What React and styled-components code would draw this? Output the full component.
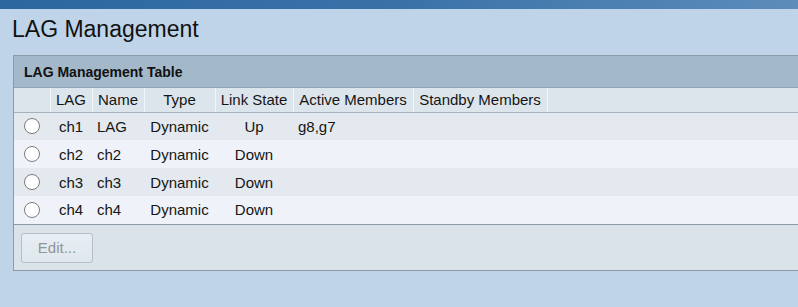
import styled, { createGlobalStyle } from "styled-components"

const Global = createGlobalStyle`
  html, body {
    margin: 0;
    padding: 0;
    background: #bfd4e8;
    overflow: hidden;
    font-family: "Liberation Sans", Arial, sans-serif;
  }
`

const TopBar = styled.div`
  height: 9px;
  background: linear-gradient(to right, #2c67a0 0%, #3a72a8 50%, #5c8cba 100%);
`

const Title = styled.h1`
  margin: 0;
  padding: 7px 0 0 12px;
  height: 39px;
  font-size: 23px;
  font-weight: normal;
  color: #111;
`

const Panel = styled.section`
  margin-left: 13px;
  width: 785px;
  border: 1px solid #8b9aa7;
  border-right: none;
  background: #dae3ea;
`

const PanelHeader = styled.div`
  height: 31px;
  display: flex;
  align-items: center;
  padding-left: 10px;
  background: #a3b8c9;
  border-bottom: 1px solid #8fa3b3;
  font-size: 14px;
  font-weight: bold;
  color: #111;
`

const Table = styled.table`
  width: 784px;
  table-layout: fixed;
  border-collapse: collapse;
  font-size: 15px;
  color: #151515;
  border-bottom: 1px solid #8b9aa7;
`

const Th = styled.th`
  box-sizing: border-box;
  height: 24px;
  padding: 0 2px;
  width: ${p => p.$w}px;
  background: #dde5ec;
  border-left: ${p => p.$first ? "none" : "1px solid #f3f6f9"};
  border-bottom: 1px solid #a6b3be;
  font-weight: normal;
  text-align: center;
  white-space: nowrap;
  overflow: hidden;
`

const Row = styled.tr`
  height: 28px;
  background: ${p => p.$alt ? "#eff3f9" : "#e3e9ef"};
`

const Td = styled.td`
  padding: 0 5px;
  text-align: ${p => p.$align || "center"};
  white-space: nowrap;
`

const Radio = styled.span`
  display: block;
  width: 14px;
  height: 14px;
  border: 1px solid #7a7a7a;
  border-radius: 50%;
  background: #fff;
  margin-left: 5px;
`

const Footer = styled.div`
  height: 45px;
  padding: 8px 0 0 7px;
  box-sizing: border-box;
`

const Button = styled.button`
  width: 72px;
  height: 30px;
  border: 1px solid #b6bfc7;
  border-radius: 3px;
  background: linear-gradient(#e8eef3, #dfe7ed);
  color: #8e959b;
  font-family: "Liberation Sans", Arial, sans-serif;
  font-size: 15px;
  padding: 0;
`

const columns = [
  { label: "", w: 36 },
  { label: "LAG", w: 42 },
  { label: "Name", w: 52 },
  { label: "Type", w: 71 },
  { label: "Link State", w: 78 },
  { label: "Active Members", w: 120 },
  { label: "Standby Members", w: 134 },
  { label: "", w: 251 },
]

const rows = [
  { lag: "ch1", name: "LAG", type: "Dynamic", state: "Up", active: "g8,g7" },
  { lag: "ch2", name: "ch2", type: "Dynamic", state: "Down", active: "" },
  { lag: "ch3", name: "ch3", type: "Dynamic", state: "Down", active: "" },
  { lag: "ch4", name: "ch4", type: "Dynamic", state: "Down", active: "" },
]

export default function App() {
  return (
    <>
      <Global />
      <TopBar />
      <Title>LAG Management</Title>
      <Panel>
        <PanelHeader>LAG Management Table</PanelHeader>
        <Table>
          <thead>
            <tr>
              {columns.map((c, i) => (
                <Th key={i} $first={i === 0} $w={c.w}>{c.label}</Th>
              ))}
            </tr>
          </thead>
          <tbody>
            {rows.map((r, i) => (
              <Row key={r.lag} $alt={i % 2 === 1}>
                <Td $align="left"><Radio /></Td>
                <Td>{r.lag}</Td>
                <Td $align="left">{r.name}</Td>
                <Td>{r.type}</Td>
                <Td>{r.state}</Td>
                <Td $align="left">{r.active}</Td>
                <Td></Td>
                <Td></Td>
              </Row>
            ))}
          </tbody>
        </Table>
        <Footer>
          <Button disabled>Edit...</Button>
        </Footer>
      </Panel>
    </>
  )
}
